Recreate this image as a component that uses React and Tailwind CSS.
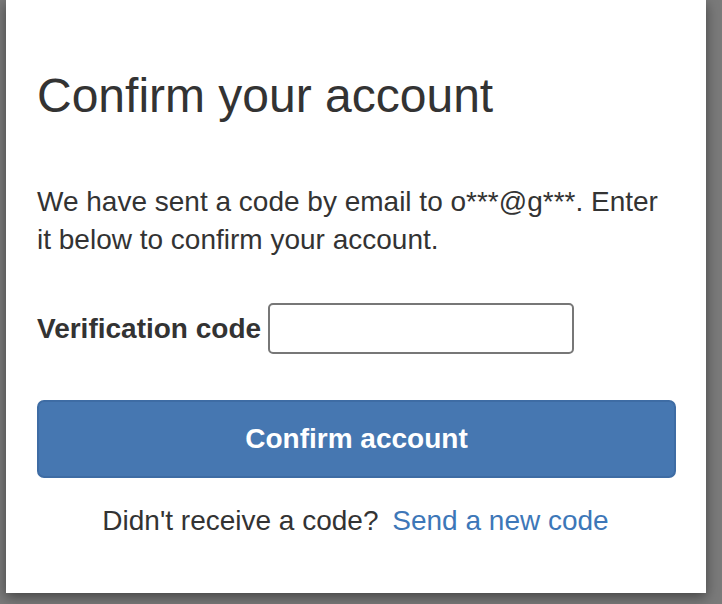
export default function App() {
  return (
    <div className="w-[722px] h-[604px] bg-[#7a7a7a] overflow-hidden" style={{ fontFamily: '"Liberation Sans", Arial, sans-serif' }}>
      <div className="ml-[6px] w-[700px] h-[593px] bg-white shadow-[0_4px_12px_rgba(0,0,0,0.45)] pl-[31px] pr-[30px] pt-[72px] text-[#333]">
        <h1 className="text-[48px] leading-[48px] font-normal">Confirm your account</h1>
        <p className="mt-[63px] text-[28px] leading-[38px]">
          We have sent a code by email to o***@g***. Enter it below to confirm your account.
        </p>
        <div className="mt-[44px] flex items-center gap-[7px]">
          <label className="text-[28px] font-bold leading-[40px]">Verification code</label>
          <input type="text" className="w-[306px] h-[51px] border-2 border-[#777] rounded-[5px] outline-none" />
        </div>
        <button className="mt-[46px] w-[639px] h-[78px] bg-[#4677b1] border-2 border-[#3e6ca4] rounded-[7px] text-white text-[28px] font-bold">
          Confirm account
        </button>
        <div className="mt-[23px] text-center text-[28px] leading-[40px] pr-[2px]">
          Didn't receive a code?{" "}
          <a className="ml-[6px] text-[#3d77b8]">Send a new code</a>
        </div>
      </div>
    </div>
  );
}
